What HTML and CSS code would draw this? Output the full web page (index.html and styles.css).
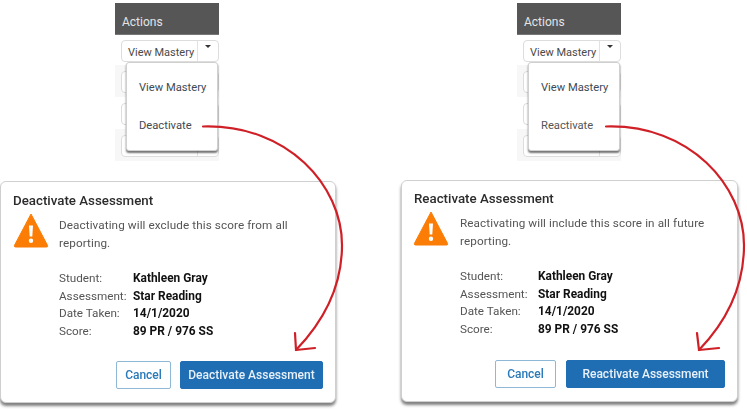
FILE: index.html
```html
<!DOCTYPE html>
<html lang="en">
<head>
<meta charset="utf-8">
<title>Deactivate and reactivate assessment</title>
<link rel="stylesheet" href="styles.css">
</head>
<body>
<main class="page">
  <section class="panel panel-left">
    <div class="actions">
      <div class="actions-head">Actions</div>
      <div class="split"><span class="split-label">View Mastery</span><span class="split-caret"></span></div>
      <div class="ghost ghost-shaded"><div class="split split-ghost"><span class="split-label"></span><span class="split-caret"></span></div></div>
      <div class="ghost"><div class="split split-ghost"><span class="split-label"></span><span class="split-caret"></span></div></div>
      <div class="ghost ghost-shaded"><div class="split split-ghost"><span class="split-label"></span><span class="split-caret"></span></div></div>
      <ul class="menu">
        <li class="menu-item">View Mastery</li>
        <li class="menu-item">Deactivate</li>
      </ul>
    </div>
    <div class="dialog">
      <h2 class="dialog-title">Deactivate Assessment</h2>
      <div class="dialog-body">
        <svg class="warn" viewBox="0 0 36 36" aria-hidden="true"><path d="M18 2 L34.6 33.5 Q35 35 33.5 35 L2.5 35 Q1 35 1.4 33.5 Z" fill="#fb7d05" stroke="#fb7d05" stroke-linejoin="round"/><path d="M16 13.5h4l-.7 11h-2.6z M18 26.6a2.2 2.2 0 1 1 0 4.4a2.2 2.2 0 1 1 0-4.4z" fill="#fff"/></svg>
        <div class="dialog-text">
          <p class="message">Deactivating will exclude this score from all reporting.</p>
          <dl class="facts">
            <dt>Student:</dt><dd>Kathleen Gray</dd>
            <dt>Assessment:</dt><dd>Star Reading</dd>
            <dt>Date Taken:</dt><dd>14/1/2020</dd>
            <dt>Score:</dt><dd>89 PR / 976 SS</dd>
          </dl>
        </div>
      </div>
      <div class="dialog-buttons">
        <button class="btn btn-cancel">Cancel</button>
        <button class="btn btn-primary">Deactivate Assessment</button>
      </div>
    </div>
  </section>

  <section class="panel panel-right">
    <div class="actions">
      <div class="actions-head">Actions</div>
      <div class="split"><span class="split-label">View Mastery</span><span class="split-caret"></span></div>
      <div class="ghost ghost-shaded"><div class="split split-ghost"><span class="split-label"></span><span class="split-caret"></span></div></div>
      <div class="ghost"><div class="split split-ghost"><span class="split-label"></span><span class="split-caret"></span></div></div>
      <div class="ghost ghost-shaded"><div class="split split-ghost"><span class="split-label"></span><span class="split-caret"></span></div></div>
      <ul class="menu">
        <li class="menu-item">View Mastery</li>
        <li class="menu-item menu-item-grey">Reactivate</li>
      </ul>
    </div>
    <div class="dialog">
      <h2 class="dialog-title">Reactivate Assessment</h2>
      <div class="dialog-body">
        <svg class="warn" viewBox="0 0 36 36" aria-hidden="true"><path d="M18 2 L34.6 33.5 Q35 35 33.5 35 L2.5 35 Q1 35 1.4 33.5 Z" fill="#fb7d05" stroke="#fb7d05" stroke-linejoin="round"/><path d="M16 13.5h4l-.7 11h-2.6z M18 26.6a2.2 2.2 0 1 1 0 4.4a2.2 2.2 0 1 1 0-4.4z" fill="#fff"/></svg>
        <div class="dialog-text">
          <p class="message">Reactivating will include this score in all future reporting.</p>
          <dl class="facts">
            <dt>Student:</dt><dd>Kathleen Gray</dd>
            <dt>Assessment:</dt><dd>Star Reading</dd>
            <dt>Date Taken:</dt><dd>14/1/2020</dd>
            <dt>Score:</dt><dd>89 PR / 976 SS</dd>
          </dl>
        </div>
      </div>
      <div class="dialog-buttons">
        <button class="btn btn-cancel">Cancel</button>
        <button class="btn btn-primary">Reactivate Assessment</button>
      </div>
    </div>
  </section>

  <svg class="arrows" viewBox="0 0 747 410" aria-hidden="true">
    <path d="M203 126.500C288 124 342 186 342 245C342 288 322 323 296 350" />
    <path d="M295 333L296 350L315 348" />
    <path d="M606 126.500C690 124 744 186 744 245C744 288 725 323 699 350" />
    <path d="M697 333L699 350L719 348" />
  </svg>
</main>
</body>
</html>
```

FILE: styles.css
```css
* { box-sizing: border-box; }
html, body { margin: 0; padding: 0; background: #fff; }
body { font-family: Roboto, "Liberation Sans", sans-serif; overflow: hidden; }

.page {
  position: relative;
  display: flex;
  width: 747px;
  height: 410px;
}

.panel { display: flex; flex-direction: column; }
.panel-left { width: 401px; }
.panel-right { width: 346px; }

.actions {
  position: relative;
  width: 104px;
  height: 181px;
  padding-top: 3px;
  margin-left: 115px;
  font-size: 11px;
  color: #444;
}
.panel-right .actions { margin-left: 116px; height: 180px; }

.actions-head {
  height: 32px;
  padding: 12px 7px 0;
  background: #565656;
  color: #e4e4e4;
  font-size: 12px;
  line-height: 14px;
  border-bottom: 1px solid #777;
}

.split {
  display: flex;
  height: 22px;
  width: 98px;
  margin: 5px 0 0 6px;
  border: 1px solid #ddd;
  border-radius: 4px;
  background: #fff;
  font-size: 11px;
  color: #4a4a4a;
}
.split-label {
  width: 76px;
  padding: 1px 0 0 6px;
  line-height: 21px;
  white-space: nowrap;
  overflow: hidden;
  border-right: 1px solid #e2e2e2;
}
.split-caret { position: relative; flex: 1; }
.split-caret::after {
  content: "";
  position: absolute;
  left: 7px;
  top: 4px;
  border-left: 3px solid transparent;
  border-right: 3px solid transparent;
  border-top: 3px solid #333;
}

.ghost { height: 32px; padding-top: 1px; }
.actions > .split + .ghost { margin-top: 3px; }
.ghost-shaded { background: #f7f7f7; }
.split-ghost { margin-top: 5px; }

.menu {
  position: absolute;
  left: 11px;
  top: 62px;
  width: 92px;
  height: 89px;
  margin: 0;
  padding: 16px 0 0 12px;
  list-style: none;
  background: #fff;
  border: 1px solid #d0d0d0;
  border-radius: 3px;
  box-shadow: 0 2px 2px rgba(0, 0, 0, 0.55);
}
.menu-item {
  font-size: 11.200px;
  line-height: 18px;
  margin-bottom: 20px;
  color: #3f4a55;
  white-space: nowrap;
}
.menu-item-grey { color: #555; }

.dialog {
  width: 336px;
  height: 222px;
  padding: 11px 12px 0;
  background: #fff;
  border: 1px solid #cfcfcf;
  border-radius: 6px;
  box-shadow: 0 3px 3px rgba(0, 0, 0, 0.5);
  filter: blur(0.3px);
}
.panel-right .dialog { width: 337px; padding-top: 10px; }

.dialog-title {
  margin: 0;
  font-size: 13.300px;
  font-weight: 500;
  line-height: 15px;
  color: #2c2c2c;
  white-space: nowrap;
}

.dialog-body { display: flex; margin-top: 4px; }
.warn { flex: none; width: 36px; height: 36px; }
.panel-right .warn { margin-left: -1px; }
.dialog-text { margin-left: 10px; padding-top: 4px; }
.panel-right .dialog-text { margin-left: 11px; }

.message {
  width: 255px;
  margin: 0;
  font-size: 11.700px;
  line-height: 18px;
  letter-spacing: 0.1px;
  color: #555;
}

.facts {
  display: grid;
  grid-template-columns: 74px auto;
  margin: 18px 0 0;
  font-size: 11.700px;
  line-height: 17.500px;
}
.panel-right .facts { grid-template-columns: 78px auto; }
.facts dt { color: #555; }
.facts dd { margin: 0; color: #111; font-size: 11.900px; font-weight: 700; }

.dialog-buttons {
  display: flex;
  justify-content: flex-end;
  gap: 9px;
  margin-top: 21px;
}
.panel-right .dialog-buttons { gap: 10px; margin-top: 22px; }

.btn {
  height: 28px;
  padding: 0;
  font-family: inherit;
  font-size: 12px;
  font-weight: 500;
  border-radius: 2px;
}
.btn-cancel {
  width: 55px;
  background: #fff;
  color: #2a7ab8;
  border: 1px solid #8fb8d6;
}
.btn-primary {
  width: 143px;
  background: #1f6eb4;
  color: #e8f0f8;
  border: 1px solid #1f6eb4;
}
.panel-right .btn-cancel { width: 61px; }
.panel-right .btn-primary { width: 159px; }

.arrows {
  position: absolute;
  left: 0;
  top: 0;
  width: 747px;
  height: 410px;
  pointer-events: none;
}
.arrows path {
  fill: none;
  stroke: #cf2027;
  stroke-width: 2.200px;
  stroke-linecap: round;
  stroke-linejoin: round;
}
```
